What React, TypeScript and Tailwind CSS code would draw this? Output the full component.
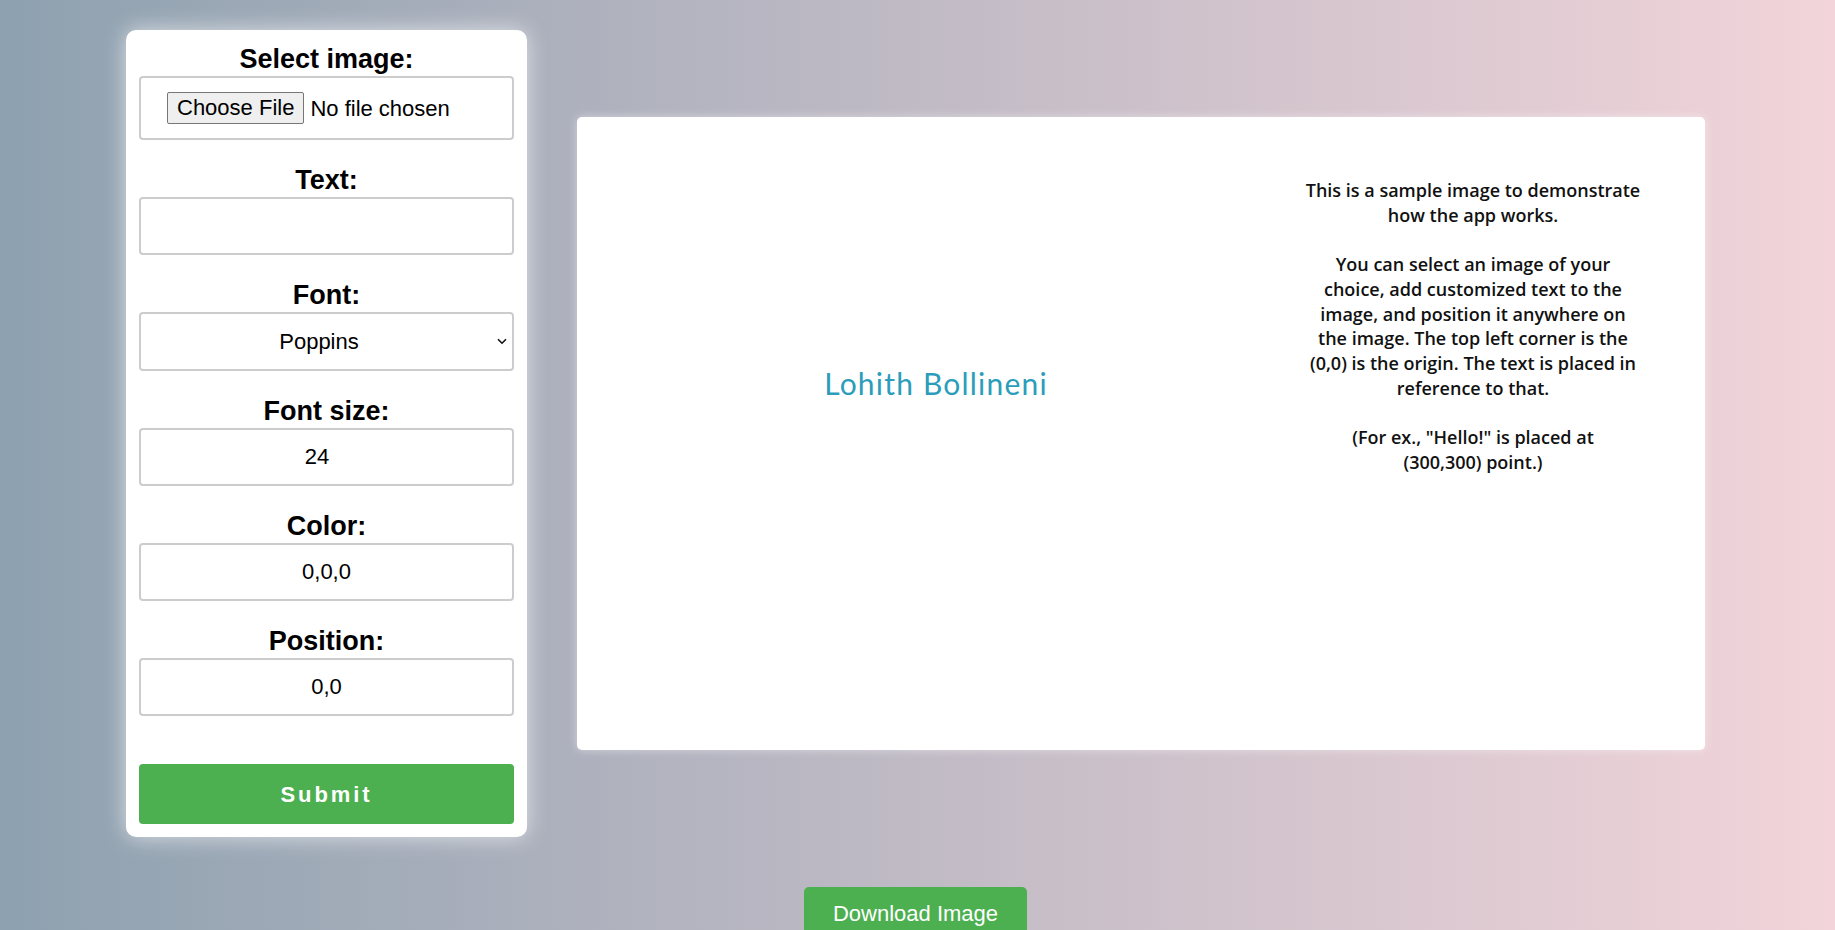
import { useState } from 'react';

const labelCls = 'block text-center font-bold text-[27px] leading-[31px] pt-[2px] mb-[1px] text-black';
const boxCls =
  'block w-full h-[58px] border-2 border-[#cccccc] rounded-[4px] bg-white text-[22px] text-black text-center outline-none';

function Field({ label, children }: { label: string; children: React.ReactNode }) {
  return (
    <div className="mb-[23px]">
      <label className={labelCls}>{label}</label>
      {children}
    </div>
  );
}

export default function App() {
  const [text, setText] = useState('');
  const [size, setSize] = useState('24');
  const [color, setColor] = useState('0,0,0');
  const [position, setPosition] = useState('0,0');

  return (
    <div className="min-h-screen w-full bg-[linear-gradient(to_right,#8ea1b0,#f2d4da)] font-['Liberation_Sans',Arial,sans-serif] pb-[24px]">
      <div className="flex items-center justify-center gap-[50px] pt-[30px] pr-[4px]">
        {/* form card */}
        <form
          onSubmit={e => e.preventDefault()}
          className="w-[401px] shrink-0 bg-white rounded-[10px] px-[13px] pt-[12px] pb-[13px] shadow-[0_0_22px_rgba(255,255,255,0.65)]"
        >
          <Field label="Select image:">
            <div className="flex items-center h-[64px] border-2 border-[#cccccc] rounded-[4px] pl-[26px] text-[22px] text-black">
              <span className="h-[32px] flex items-center px-[9px] bg-[#efefef] border border-[#767676] rounded-[2px] leading-none">
                Choose File
              </span>
              <span className="ml-[6px]">No file chosen</span>
            </div>
          </Field>

          <Field label="Text:">
            <input className={boxCls} value={text} onChange={e => setText(e.target.value)} />
          </Field>

          <Field label="Font:">
            <div className="flex items-center h-[59px] border-2 border-[#cccccc] rounded-[4px] text-[22px] text-black">
              <span className="flex-1 text-center">Poppins</span>
              <svg width="10" height="7" viewBox="0 0 10 7" className="mr-[5px]">
                <path d="M1 1.2 L5 5.2 L9 1.2" fill="none" stroke="#111" strokeWidth="1.6" />
              </svg>
            </div>
          </Field>

          <Field label="Font size:">
            <input className={`${boxCls} pr-[19px]`} value={size} onChange={e => setSize(e.target.value)} />
          </Field>

          <Field label="Color:">
            <input className={boxCls} value={color} onChange={e => setColor(e.target.value)} />
          </Field>

          <div>
            <label className={labelCls}>Position:</label>
            <input className={boxCls} value={position} onChange={e => setPosition(e.target.value)} />
          </div>

          <button
            type="submit"
            className="mt-[48px] w-full h-[60px] bg-[#4caf50] rounded-[4px] text-white font-bold text-[22px] tracking-[2.9px]"
          >
            Submit
          </button>
        </form>

        {/* preview image */}
        <div className="relative w-[1128px] h-[633px] shrink-0 bg-white rounded-[5px] shadow-[0_0_10px_rgba(255,255,255,0.45)]">
          <div className="absolute left-[159px] top-[251px] w-[400px] text-center font-['Lato',sans-serif] text-[30px] leading-none tracking-[1.2px] text-[#2b9dbb]">
            Lohith Bollineni
          </div>
          <div className="absolute left-[696px] top-[61px] w-[400px] text-center font-['Open_Sans',sans-serif] font-semibold text-[18px] leading-[24.7px] text-[#111111]">
            <p>This is a sample image to demonstrate</p>
            <p>how the app works.</p>
            <p>&nbsp;</p>
            <p>You can select an image of your</p>
            <p>choice, add customized text to the</p>
            <p>image, and position it anywhere on</p>
            <p>the image. The top left corner is the</p>
            <p>(0,0) is the origin. The text is placed in</p>
            <p>reference to that.</p>
            <p>&nbsp;</p>
            <p>(For ex., "Hello!" is placed at</p>
            <p>(300,300) point.)</p>
          </div>
        </div>
      </div>

      <div className="flex justify-center mt-[50px] pr-[4px]">
        <button className="px-[29px] py-[14px] bg-[#4caf50] rounded-[5px] text-white text-[22px] leading-[25px]">
          Download Image
        </button>
      </div>
    </div>
  );
}
